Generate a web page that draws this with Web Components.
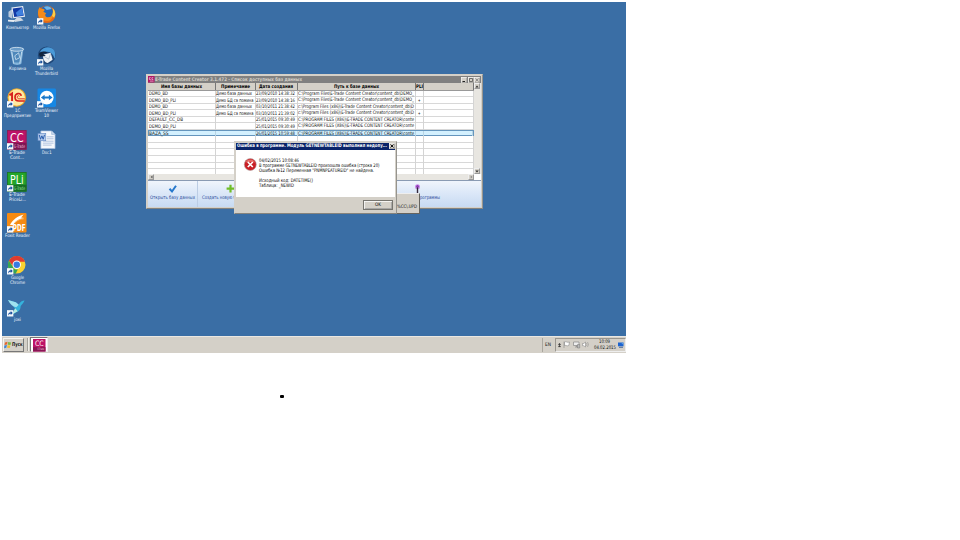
<!DOCTYPE html>
<html lang="ru">
<head>
<meta charset="utf-8">
<title>E-Trade Content Creator</title>
<style>
  body {
    margin: 0;
    width: 960px;
    height: 540px;
    overflow: hidden;
    background: #fff;
    font-family: "DejaVu Sans Condensed", "DejaVu Sans", sans-serif;
  }
  remote-desktop { margin: 2px 0 0 2px; }
  .bullet {
    width: 4px;
    height: 3px;
    margin: 42px 0 0 280px;
    border-radius: 1px;
    background: #000;
  }
</style>
</head>
<body>
<remote-desktop></remote-desktop>
<div class="bullet"></div>

<script>
// One line of text drawn at a fixed width
class FitText extends HTMLElement {
  constructor() {
    super();
    this.attachShadow({ mode: 'open' });
  }

  connectedCallback() {
    const w = this.getAttribute('w');
    const size = parseFloat(this.getAttribute('size') || 4.9);
    const h = parseFloat(this.getAttribute('line') || 5.2);
    const text = this.getAttribute('text');
    const base = h / 2 + size * 0.36;
    this.shadowRoot.innerHTML = `
      <style>
        :host { display: block; flex: none; width: ${w}px; height: ${h}px; }
        svg { display: block; overflow: visible; }
        text { fill: currentColor; font-size: ${size}px; text-rendering: geometricPrecision; }
      </style>
      <svg width="${w}" height="${h}"><text x="0" y="${base}" textLength="${w}" lengthAdjust="spacingAndGlyphs">${text}</text></svg>
    `;
  }
}

const SHORTCUT = `
  <rect x="0" y="13.5" width="6.5" height="6.5" fill="#f4f8fc"/>
  <path d="M1.2 19c0-2.4 1-3.3 2.6-3.3v-1.3l2.1 2-2.1 2v-1.2c-1.2 0-1.9.5-2.6 1.8z" fill="#164f9c"/>`;

const ICONS = {
  computer: `
    <path d="M1.5 7l4-3v10l-4-2z" fill="#b9c9dc"/>
    <path d="M4.5 2.5l12-1.5 2 11-12 1.5z" fill="#e8eef5"/>
    <path d="M5.8 3.5l9.8-1.2 1.5 8.700-9.700 1.200z" fill="#1239a5"/>
    <path d="M9 8l6.300-5.200 1.700 7.700-6.500.8z" fill="#3f80df"/>
    <path d="M10 13h4l3 3-9 1.500-1-1.500z" fill="#cfd8e2"/>
    <path d="M1 15l7 .5-1 2-6-.5z" fill="#e6ebf0"/>`,
  trash: `
    <path d="M3 3l14-1-2.200 16c-2 2-7 2-8.700 0z" fill="#85b5db"/>
    <path d="M5 5l10-1-1.800 13H7z" fill="#4d87ba"/>
    <ellipse cx="10" cy="3.400" rx="7" ry="2" fill="#699bc8" stroke="#e1edf6" stroke-width=".8"/>
    <path d="M5 6l2 12M15 6l-2 12M8 10l4-3 1 5-4 2z" stroke="#d5e6f3" stroke-width=".8" fill="none"/>`,
  onec: `
    <circle cx="10" cy="9.800" r="9.500" fill="#f0a928"/>
    <circle cx="10" cy="9.800" r="8.400" fill="#ffeaa0"/>
    <path d="M2.500 7.500L5.200 5.500v8.500" fill="none" stroke="#d8211b" stroke-width="2"/>
    <path d="M14.600 8C14 4.500 8.200 5 8.200 9.400c0 3 2 3.900 4 3.900h6" fill="none" stroke="#d8211b" stroke-width="1.700"/>
    <path d="M12.800 8.600c-.8-1.300-2.300-.7-2.300.8 0 1.200.9 1.700 1.900 1.700h5.800" fill="none" stroke="#d8211b" stroke-width=".9"/>${SHORTCUT}`,
  cc: `<rect width="20" height="20" fill="#bd1267"/><rect y="13" width="20" height="7" fill="#7c1552"/>
    <rect x=".4" y=".4" width="19.200" height="19.200" fill="none" stroke="#7a2454" stroke-width=".8"/>
    <text x="3" y="11.800" font-size="13" textLength="14" lengthAdjust="spacingAndGlyphs" fill="#fff">CC</text>
    <text x="7.500" y="18.500" font-size="5" textLength="11" lengthAdjust="spacingAndGlyphs" fill="#f4bfdb">E-Trade</text>${SHORTCUT}`,
  pli: `<rect width="20" height="20" fill="#23a629"/><rect y="13" width="20" height="7" fill="#176d25"/>
    <rect x=".4" y=".4" width="19.200" height="19.200" fill="none" stroke="#1d6b2b" stroke-width=".8"/>
    <text x="3" y="11.800" font-size="13" textLength="14" lengthAdjust="spacingAndGlyphs" fill="#fff">PLi</text>
    <text x="7.500" y="18.500" font-size="5" textLength="11" lengthAdjust="spacingAndGlyphs" fill="#9be097">E-Trade</text>${SHORTCUT}`,
  foxit: `<rect width="20" height="20" rx="1" fill="#f58a12"/>
    <path d="M3 12C6 7 11 3 17 1.500l-2.500 3 3 .5C12 6 8 9 6 12.500z" fill="#fff"/>
    <path d="M8 10c3-3 6-4 9-4" stroke="#f7b266" fill="none"/>
    <text x="6" y="18.800" font-size="9" font-weight="bold" textLength="13" lengthAdjust="spacingAndGlyphs" fill="#fff">PDF</text>${SHORTCUT}`,
  chrome: `
    <circle cx="10" cy="10" r="9" fill="#f9d230"/>
    <path d="M2 5.800A9 9 0 0 1 18.500 7H10a4 4 0 0 0-3.800 4.500z" fill="#df3b30"/>
    <path d="M2 5.800L6.600 13c1 1.700 3 2.200 4.600 1.700L9 19A9 9 0 0 1 2 5.800z" fill="#35a653"/>
    <circle cx="10" cy="10" r="4.300" fill="#fff"/><circle cx="10" cy="10" r="3.300" fill="#397be0"/>${SHORTCUT}`,
  joxi: `
    <path d="M1 3l8 2.500c1.500.8 2 1.500 3 2.500 1-3 4-4.500 6-4.500-1 3-3 4-4 6 0 3-1.500 5-4 6l-5 3 3-7z" fill="#35b3dc"/>
    <path d="M1 3l8 2.500 3 2.500-2.500 2.500C6 10 3 7 1 3z" fill="#9fe2ee"/>
    <path d="M8.500 11.500L5 18l6-3.500z" fill="#b6eadf"/>${SHORTCUT}`,
  firefox: `
    <circle cx="10" cy="9.500" r="9" fill="#e66a16"/>
    <circle cx="10" cy="7" r="6.300" fill="#2468b8"/>
    <path d="M7 2c3-1.500 7-1 8 2l-5 1z" fill="#6db6ea"/>
    <path d="M1 8c0-3 1-5 2-6l1 2c2-.5 3 0 4 1L6.500 7l3 1.500C8 9.500 8 12 10.500 12.500c3 .5 5-1 6-4 1 4-2 8-6 8-6 0-9.500-4-9.500-8.500z" fill="#f28a1b"/>
    <path d="M16 3c3 3 3.500 7 1.500 10l-2-2c1-3 1.200-5 .5-8z" fill="#fbd047"/>${SHORTCUT}`,
  thunderbird: `
    <circle cx="10" cy="9.500" r="9" fill="#1f4778"/>
    <path d="M3 6C7 0 15 0 18 5c1 3 1 6 0 8-1-4-4-8-9-7z" fill="#4a9ad8"/>
    <path d="M6 9l8-2 2 7-5 3.500c-3 0-5-4-5-8.500z" fill="#edf1f5"/>
    <path d="M6 10l6 3.500 2-6" fill="none" stroke="#a3b3c4" stroke-width=".8"/>
    <path d="M2 8c3-3 6-3 9-1l-5 1 3 2-6 1z" fill="#10233c"/>${SHORTCUT}`,
  teamviewer: `
    <rect x=".5" y=".5" width="19" height="19" rx="1.500" fill="#1687e4"/>
    <circle cx="10" cy="9.800" r="7" fill="#fff"/>
    <path d="M4 9.800L7.800 7v1.800h4.400V7L16 9.800l-3.800 2.800v-1.800H7.800v1.800z" fill="#1877ca"/>${SHORTCUT}`,
  doc: `
    <path d="M4 1h11l3.500 3.500V19H4z" fill="#f5f8fc" stroke="#aac0de" stroke-width=".7"/>
    <path d="M15 1v3.500h3.500" fill="#cbd9ec" stroke="#91aed3" stroke-width=".6"/>
    <path d="M10 7h7M10 9h7M6 11.500h11M6 13.500h11M6 15.500h9" stroke="#9db3d6" stroke-width=".8"/>
    <rect x="1" y="3.500" width="8" height="7.500" fill="#b7cdec" stroke="#5d85c2" stroke-width=".6"/>
    <path d="M2.300 5l1.300 4.500L5 6l1.300 3.500L7.700 5" fill="none" stroke="#285bac" stroke-width="1"/>`
};

class DesktopIcon extends HTMLElement {
  constructor() {
    super();
    this.attachShadow({ mode: 'open' });
  }

  connectedCallback() {
    // label lines come as "text:width|text:width"
    const lines = this.getAttribute('label').split('|').map(line => line.split(':'));
    this.shadowRoot.innerHTML = `
      <style>
        :host { display: flex; flex-direction: column; align-items: center; color: #f2f7ff; }
        svg { display: block; flex: none; margin-bottom: .5px; overflow: visible; }
      </style>
      <svg width="19.500" height="19.500" viewBox="0 0 20 20">${ICONS[this.getAttribute('icon')]}</svg>
      ${lines.map(([text, w]) => `<fit-text text="${text}" w="${w}" size="4.700" line="5"></fit-text>`).join('')}
    `;
  }
}

const ROWS = [
  ['DEMO_BD:19', 'Демо база данных:36', '23/09/2010 14:38:32', 'C:\\Program Files\\E-Trade Content Creator\\content_db\\DEMO_:116', ''],
  ['DEMO_BD_PLI:27', 'Демо БД са помина:37.5', '23/09/2010 14:38:16', 'C:\\Program Files\\E-Trade Content Creator\\content_db\\DEMO_:116', '+'],
  ['DEMO_BD:19', 'Демо база данных:36', '03/10/2011 21:38:42', 'c:\\Program Files (x86)\\E-Trade Content Creator\\content_db\\D:116', ''],
  ['DEMO_BD_PLI:27', 'Демо БД са помина:37.5', '03/10/2011 21:39:02', 'c:\\Program Files (x86)\\E-Trade Content Creator\\content_db\\D:116', '+'],
  ['DEFAULT_CC_DB:34', '', '25/01/2015 09:30:49', 'C:\\PROGRAM FILES (X86)\\E-TRADE CONTENT CREATOR\\conte:116', ''],
  ['DEMO_BD_PLI:27', '', '25/01/2015 09:30:49', 'C:\\PROGRAM FILES (X86)\\E-TRADE CONTENT CREATOR\\conte:116', ''],
  ['BAZA_SS:19.500', '', '26/01/2015 10:59:48', 'C:\\PROGRAM FILES (X86)\\E-TRADE CONTENT CREATOR\\conte:116', ''],
  [], [], [], [], [], []
];

class DatabaseTable extends HTMLElement {
  constructor() {
    super();
    this.attachShadow({ mode: 'open' });
  }

  cell(value, w) {
    if (!value) return '<span></span>';
    const cut = value.lastIndexOf(':');
    return w
      ? `<span><fit-text text="${value}" w="${w}" size="4.900"></fit-text></span>`
      : `<span><fit-text text="${value.slice(0, cut)}" w="${value.slice(cut + 1)}" size="4.900"></fit-text></span>`;
  }

  connectedCallback() {
    this.shadowRoot.innerHTML = `
      <style>
        :host { display: grid; grid-template: 91px 6px / 326px 6.500px; background: #fff; color: #101010; }
        .grid { overflow: hidden; }
        .row {
          display: grid;
          grid-template-columns: 67.500px 40px 42.500px 118px 8px 50px;
          height: 6.560px;
          box-sizing: border-box;
          background: linear-gradient(#d8d8d8, #d8d8d8) bottom / 100% 1px no-repeat;
        }
        span { display: flex; align-items: center; padding-left: .8px; border-right: 1px solid #d4d4d4; box-sizing: border-box; }
        span:nth-child(4) { align-items: flex-start; padding-left: 0; }
        span:nth-child(5) { padding-left: 1.500px; }
        .row.head { background: #d4d0c8; border-bottom: 1px solid #999; height: 7.500px; font-weight: bold; color: #000; }
        .head span { justify-content: center; align-items: center; padding: 0 !important; border-right-color: #777; }
        .row.active { background: #d3f0fe; border: 1px solid #6495bd; grid-template-columns: 66.500px 40px 42.500px 118px 8px 49px; }
        .active span { border-color: #b9d4e3; padding-left: 0; }
        .track { background: #e8e6e1; display: flex; justify-content: space-between; }
        .track.v { flex-direction: column; }
        b { width: 6px; height: 6px; box-sizing: border-box; background: #d4d0c8; border: 1px solid; border-color: #eee #999 #999 #eee; display: grid; place-items: center; }
        svg { display: block; }
      </style>
      <div class="grid">
        <div class="row head">
          ${[['Имя базы данных', 41], ['Примечание', 29], ['Дата создания', 34], ['Путь к базе данных', 45], ['PLI', 7]]
            .map(([text, w]) => `<span><fit-text text="${text}" w="${w}" size="4.900"></fit-text></span>`).join('')}<span></span>
        </div>
        ${ROWS.map((row, n) => `
          <div class="row ${n === 6 ? 'active' : ''}">
            ${this.cell(row[0])}${this.cell(row[1])}${this.cell(row[2], 38.8)}${this.cell(row[3])}${this.cell(row[4], 2.5)}<span></span>
          </div>
        `).join('')}
      </div>
      <div class="track v">
        <b><svg width="4" height="3"><path d="M2 .5L3.700 2.500H.3z" fill="#333"/></svg></b>
        <b><svg width="4" height="3"><path d="M2 2.500L3.700 .5H.3z" fill="#333"/></svg></b>
      </div>
      <div class="track">
        <b><svg width="3" height="4"><path d="M.7 2L2.500 .5v3z" fill="#555"/></svg></b>
        <b><svg width="3" height="4"><path d="M2.500 2L.7 .5v3z" fill="#888"/></svg></b>
      </div>
      <div></div>
    `;
  }
}

class AppWindow extends HTMLElement {
  constructor() {
    super();
    this.attachShadow({ mode: 'open' });
  }

  connectedCallback() {
    this.shadowRoot.innerHTML = `
      <style>
        :host {
          display: flex; flex-direction: column; box-sizing: border-box;
          padding: 1px; background: #d4d0c8;
          border: 1px solid; border-color: #d4d0c8 #96948e #85837d #d4d0c8;
        }
        .title { display: flex; align-items: center; height: 7px; flex: none; background: #808080; color: #d4d0c8; font-weight: bold; }
        .buttons { display: flex; gap: .5px; margin-left: auto; padding-right: .5px; }
        .buttons svg { display: block; background: #d4d0c8; box-shadow: inset .5px .5px #fff, inset -.5px -.5px #888; }
        :host([kind="dialog"]) .title { background: #0a246a; color: #fff; padding-left: 1px; }
      </style>
      <div class="title"><slot name="title"></slot><div class="buttons">
        ${this.getAttribute('kind') === 'dialog' ? '' : `
          <svg width="6" height="6"><path d="M1.500 4.500h2.500" stroke="#222"/></svg>
          <svg width="6" height="6"><path d="M1.500 1.500h3v3h-3z" stroke="#444" stroke-width=".7" fill="none"/></svg>`}
        <svg width="6" height="6"><path d="M1.500 1.500l3 3m0-3l-3 3" stroke="${this.getAttribute('kind') === 'dialog' ? '#000' : '#888'}" stroke-width=".9"/></svg>
      </div></div>
      <slot></slot>
    `;
  }
}

class ToolButton extends HTMLElement {
  constructor() {
    super();
    this.attachShadow({ mode: 'open' });
    this.shadowRoot.innerHTML = `
      <style>
        :host { display: flex; flex-direction: column; align-items: center; gap: 2px; padding-top: 3px; box-sizing: border-box; color: #1f4798; }
      </style>
      <slot name="icon"></slot>
      <slot></slot>
    `;
  }
}

class TaskBar extends HTMLElement {
  constructor() {
    super();
    this.attachShadow({ mode: 'open' });
  }

  connectedCallback() {
    this.shadowRoot.innerHTML = `
      <style>
        :host { display: flex; align-items: center; box-sizing: border-box; background: #d4d0c8; border-top: 1px solid #e9e7e2; color: #111; }
        .start { display: flex; align-items: center; gap: .5px; width: 21.500px; height: 14px; margin-left: .5px; box-sizing: border-box; padding-left: .5px; border: 1px solid; border-color: #f5f4f0 #777 #777 #f5f4f0; font-weight: bold; }
        .sep { width: 1px; height: 13px; margin: 0 1px 0 3px; background: #a5a29b; border-right: 1px solid #f0eee9; }
        .task { width: 18px; height: 15px; display: grid; place-items: center; background: #fff; border: 1px solid; border-color: #777 #eee #eee #777; box-sizing: border-box; }
        .lang { margin-left: auto; width: 13px; height: 14px; display: flex; align-items: center; padding-left: 2px; border-left: 1px solid #aaa79f; box-sizing: border-box; }
        .tray { display: flex; align-items: center; width: 71px; height: 14px; border: 1px solid; border-color: #99968f #eee #eee #99968f; box-sizing: border-box; padding-left: 1.500px; gap: 2.500px; }
        .clock { display: flex; flex-direction: column; align-items: center; gap: 1px; margin-left: 2px; }
        svg { display: block; flex: none; overflow: visible; }
      </style>
      <div class="start">
        <svg width="7.500" height="7.500" viewBox="0 0 8 8"><path d="M1 1.500l2.800-.8-.6 3-2.700.6z" fill="#e7662d"/><path d="M4.400 1l3.200.5-.7 2.800-3-.4z" fill="#79b94d"/><path d="M.4 4.800l2.700-.6-.6 2.900-2.400.5z" fill="#3f83d2"/><path d="M3.800 4.500l3 .4-.7 2.600-2.900-.4z" fill="#f2bd32"/></svg>
        <fit-text text="Пуск" w="10.500" size="5.200"></fit-text>
      </div>
      <div class="sep"></div>
      <div class="task"><svg width="12.500" height="12.500" viewBox="0 0 20 20"><rect width="20" height="20" fill="#bd1267"/><rect y="13" width="20" height="7" fill="#8a1554"/><text x="3" y="11.500" font-size="12" textLength="14" lengthAdjust="spacingAndGlyphs" fill="#fff">CC</text><text x="7" y="18" font-size="5" fill="#f4bfdb" textLength="11" lengthAdjust="spacingAndGlyphs">E-Trade</text></svg></div>
      <div class="lang"><fit-text text="EN" w="6" size="4.900"></fit-text></div>
      <div class="tray">
        <svg width="3" height="6"><path d="M.3 2.700L1.500 1.200l1.200 1.500zM.3 4.800l1.200-1.500 1.200 1.500z" fill="#222" stroke="#222" stroke-width=".3"/></svg>
        <svg width="7" height="7"><path d="M1 .5v6.500M1.500 1c2-1 2.500 1 5 0L5.800 4.500c-2 1-2.800-.6-4.300 0z" fill="#fff" stroke="#888" stroke-width=".6"/></svg>
        <svg width="7" height="7"><path d="M.5 1h5.500v3.500H.5zM2 6h3.500M3.500 4.500V6" fill="#eee" stroke="#888" stroke-width=".7"/><path d="M4.500 3.500h2.200V7H4.500z" fill="#bbb" stroke="#777" stroke-width=".5"/></svg>
        <svg width="7" height="7"><path d="M.5 2.500h1.300L3.500 1v5L1.800 4.700H.5z" fill="#fff" stroke="#777" stroke-width=".5"/><path d="M4.500 2q1 1.500 0 3M5.500 1q2 2.500 0 5" fill="none" stroke="#888" stroke-width=".5"/></svg>
        <div class="clock"><fit-text text="10:09" w="11" size="4.900"></fit-text><fit-text text="04.02.2015" w="22" size="4.900"></fit-text></div>
        <svg width="6" height="6"><path d="M0 .5h5.500v3.800H0z" fill="#1d64cf"/><path d="M1 5.300h4" stroke="#516e9a"/><path d="M3 .8h2.300v2z" fill="#60a8f0"/></svg>
      </div>
    `;
  }
}

class RemoteDesktop extends HTMLElement {
  constructor() {
    super();
    this.attachShadow({ mode: 'open' });
  }

  connectedCallback() {
    this.shadowRoot.innerHTML = `
      <style>
        :host { display: grid; grid-template-rows: 333.500px 17.500px; position: relative; width: 624px; height: 351px; overflow: hidden; background: #3a6ea5; }
        .icons { display: grid; grid-auto-flow: column; grid-template: repeat(8, 41.700px) / 29.500px 29.500px; padding: 2.800px 0 0 .4px; height: 330px; box-sizing: border-box; }
        svg { display: block; flex: none; overflow: visible; }
        app-window, .hint { position: absolute; }
        .main { left: 144px; top: 72px; width: 336.500px; height: 135px; }
        .toolbar { display: flex; flex: 1; border-top: 1px solid #8a9bb3; background: linear-gradient(#f0f5fc, #dce8f8 45%, #c7daf2); }
        .toolbar tool-button:first-child { width: 50px; border-right: 1px solid #bccde4; }
        .toolbar tool-button:nth-child(2) { width: 64px; }
        .toolbar tool-button:last-child { width: 50px; margin-left: 130px; }
        .hint { left: 392px; top: 191px; width: 26px; height: 20.500px; box-sizing: border-box; display: flex; align-items: flex-end; padding: 0 0 3px 2px; background: #d4d0c8; border: 1px solid; border-color: #eee #66645f #66645f #eee; color: #111; }
        .dialog { left: 232px; top: 138.500px; width: 163px; height: 73.500px; color: #050505; }
        .message { display: flex; gap: 2.500px; height: 47.500px; flex: none; box-sizing: border-box; padding: 8px 0 0 7.500px; background: #fff; }
        .lines { display: flex; flex-direction: column; }
        .lines div { height: 5.100px; }
        .ok { width: 30px; height: 9.500px; box-sizing: border-box; margin: 3px 2px 0 auto; display: grid; place-items: center; border: 1px solid #77756f; box-shadow: inset .7px .7px #fff, inset -.7px -.7px #999; }
      </style>
      <div class="icons">
        <desktop-icon icon="computer" label="Компьютер:23"></desktop-icon>
        <desktop-icon icon="trash" label="Корзина:17"></desktop-icon>
        <desktop-icon icon="onec" label="1C:5|Предприятие:27"></desktop-icon>
        <desktop-icon icon="cc" label="E-Trade:16|Cont...:14"></desktop-icon>
        <desktop-icon icon="pli" label="E-Trade:16|PriceLi...:17"></desktop-icon>
        <desktop-icon icon="foxit" label="Foxit Reader:25"></desktop-icon>
        <desktop-icon icon="chrome" label="Google:13|Chrome:15"></desktop-icon>
        <desktop-icon icon="joxi" label="joxi:7"></desktop-icon>
        <desktop-icon icon="firefox" label="Mozilla Firefox:27"></desktop-icon>
        <desktop-icon icon="thunderbird" label="Mozilla:13|Thunderbird:23"></desktop-icon>
        <desktop-icon icon="teamviewer" label="TeamViewer:23|10:5"></desktop-icon>
        <desktop-icon icon="doc" label="Doc1:9.500"></desktop-icon>
      </div>
      <task-bar></task-bar>

      <app-window class="main">
        <svg slot="title" width="6.500" height="6.500" viewBox="0 0 7 7" style="margin:0 .5px 0 0"><rect width="7" height="7" fill="#b01566"/><path d="M3 1.800H1.500v2H3M5.700 1.800H4.200v2h1.500M2 5.500h4" fill="none" stroke="#fff" stroke-width=".6"/></svg>
        <fit-text slot="title" text="E-Trade Content Creator 3.1.472 - Список доступных баз данных" w="147" size="4.900"></fit-text>
        <database-table></database-table>
        <div class="toolbar">
          <tool-button>
            <svg slot="icon" width="9" height="9"><path d="M1.500 4.800L4 7.500 8 1.800" fill="none" stroke="#2678cc" stroke-width="2"/></svg>
            <fit-text text="Открыть базу данных" w="45"></fit-text>
          </tool-button>
          <tool-button>
            <svg slot="icon" width="9" height="9"><path d="M4.500 .7v7.800M.6 4.600h7.800" fill="none" stroke="#70be27" stroke-width="2.200"/></svg>
            <fit-text text="Создать новую базу данных" w="57"></fit-text>
          </tool-button>
          <tool-button>
            <svg slot="icon" width="9" height="9"><circle cx="4.500" cy="2.800" r="2.500" fill="#c98be8"/><path d="M4.500 2v7" stroke="#33263a" stroke-width="1.400"/><circle cx="4.500" cy="2.300" r="1.200" fill="#8d3bb8"/></svg>
            <fit-text text="Настройки программы" w="45"></fit-text>
          </tool-button>
        </div>
      </app-window>

      <div class="hint"><fit-text text="%CC\\.UPD" w="20"></fit-text></div>

      <app-window class="dialog" kind="dialog">
        <fit-text slot="title" text="Ошибка в программе. Модуль GETNEWTABLEID выполнил недопу..." w="150" size="4.900"></fit-text>
        <div class="message">
          <svg width="13" height="13"><circle cx="6.300" cy="6.500" r="6" fill="#c91f25" stroke="#b3a2a2" stroke-width=".6"/><path d="M1.500 4.500a5.300 5.300 0 0 1 9.600 0q-4.800-1.500-9.600 0z" fill="#e66c66"/><path d="M3.800 4l5 5m0-5l-5 5" stroke="#fff" stroke-width="1.700"/></svg>
          <div class="lines">
            <fit-text text="04/02/2015 10:08:46" w="40" line="5.100"></fit-text>
            <fit-text text="В программе GETNEWTABLEID произошла ошибка (строка 20)" w="120.500" line="5.100"></fit-text>
            <fit-text text="Ошибка №12 Переменная &quot;PNMNPEATUREID&quot; не найдена." w="115" line="5.100"></fit-text>
            <div></div>
            <fit-text text="Исходный код: DATETIME()" w="54" line="5.100"></fit-text>
            <fit-text text="Таблица: _NEWID" w="35" line="5.100"></fit-text>
          </div>
        </div>
        <div class="ok"><fit-text text="OK" w="6"></fit-text></div>
      </app-window>
    `;
  }
}

customElements.define('fit-text', FitText);
customElements.define('desktop-icon', DesktopIcon);
customElements.define('database-table', DatabaseTable);
customElements.define('app-window', AppWindow);
customElements.define('tool-button', ToolButton);
customElements.define('task-bar', TaskBar);
customElements.define('remote-desktop', RemoteDesktop);
</script>
</body>
</html>
